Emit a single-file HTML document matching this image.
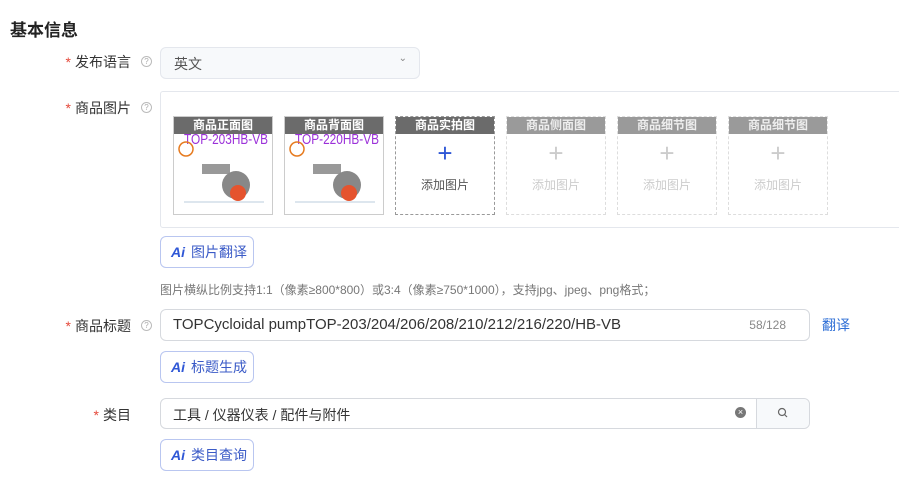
<!DOCTYPE html>
<html><head><meta charset="utf-8"><style>
*{box-sizing:border-box;margin:0;padding:0}
body{width:899px;height:485px;background:#fff;font-family:"Liberation Sans","Noto Sans CJK SC",sans-serif;color:#333;position:relative;overflow:hidden;font-size:14px}
.a{position:absolute}
.lbl{position:absolute;right:768px;font-size:14px;color:#333;white-space:nowrap}
.lbl b{color:#e5483a;font-weight:normal;margin-right:4px}
.q{position:absolute;width:11px;height:11px;border:1px solid #bbb;border-radius:50%;font-size:8px;color:#aaa;text-align:center;line-height:9px}
.ai{position:absolute;left:160px;width:94px;height:32px;border:1px solid #b9c6f0;border-radius:6px;color:#3b5bc7;font-size:14px;line-height:30px;padding-left:10px;white-space:nowrap}
.ai i{font-style:italic;font-weight:bold;margin-right:6px;color:#2f57d6}
.th{position:absolute;top:116px;width:100px;height:99px;border:1px solid #ccc;background:#fff;overflow:hidden}
.th .h{height:17px;background:#6b6b6b;color:#fff;font-size:12px;text-align:center;line-height:17px;font-weight:bold;position:relative;z-index:1}
.add{border:1px dashed #999}
.add.dim{border-color:#ddd}
.add.dim .h{background:#9a9a9a;color:#eee}
.add .p{text-align:center;font-size:26px;color:#2f57d6;line-height:26px;margin-top:6px}
.add .t{text-align:center;font-size:12px;color:#555;margin-top:10px}
.add.dim .p{color:#ccc}.add.dim .t{color:#ccc}
.th svg{position:absolute;left:0;top:0}
</style></head><body>
<div class="a" style="left:10px;top:16px;font-size:17px;font-weight:bold;color:#222">基本信息</div>

<div class="lbl" style="top:52px"><b>*</b>发布语言</div>
<div class="q" style="left:141px;top:56px">?</div>
<div class="a" style="left:160px;top:47px;width:260px;height:32px;border:1px solid #e4e7ed;border-radius:6px;background:#f7f9fb;padding:6px 13px;color:#555">英文<span style="position:absolute;right:12px;top:5px;font-size:10px;color:#888">&#8964;</span></div>

<div class="lbl" style="top:98px"><b>*</b>商品图片</div>
<div class="q" style="left:141px;top:102px">?</div>
<div class="a" style="left:160px;top:91px;width:745px;height:137px;border:1px solid #e4e7ed;border-radius:3px"></div>

<div class="th" style="left:173px"><div class="h">商品正面图</div>
<svg width="98" height="97"><text x="10" y="27" font-size="15" fill="#9b30d9" font-family="Liberation Sans" textLength="84" lengthAdjust="spacingAndGlyphs">TOP-203HB-VB</text><circle cx="12" cy="32" r="7" fill="none" stroke="#e67a1e" stroke-width="1.5"/><line x1="10" y1="85" x2="90" y2="85" stroke="#bcd" /><rect x="28" y="47" width="28" height="10" fill="#999"/><circle cx="62" cy="68" r="14" fill="#888"/><circle cx="64" cy="76" r="8" fill="#e5532e"/></svg></div>
<div class="th" style="left:284px"><div class="h">商品背面图</div>
<svg width="98" height="97"><text x="10" y="27" font-size="15" fill="#9b30d9" font-family="Liberation Sans" textLength="84" lengthAdjust="spacingAndGlyphs">TOP-220HB-VB</text><circle cx="12" cy="32" r="7" fill="none" stroke="#e67a1e" stroke-width="1.5"/><line x1="10" y1="85" x2="90" y2="85" stroke="#bcd" /><rect x="28" y="47" width="28" height="10" fill="#999"/><circle cx="62" cy="68" r="14" fill="#888"/><circle cx="64" cy="76" r="8" fill="#e5532e"/></svg></div>
<div class="th add" style="left:395px"><div class="h">商品实拍图</div><div class="p">+</div><div class="t">添加图片</div></div>
<div class="th add dim" style="left:506px"><div class="h">商品侧面图</div><div class="p">+</div><div class="t">添加图片</div></div>
<div class="th add dim" style="left:617px"><div class="h">商品细节图</div><div class="p">+</div><div class="t">添加图片</div></div>
<div class="th add dim" style="left:728px"><div class="h">商品细节图</div><div class="p">+</div><div class="t">添加图片</div></div>

<div class="ai" style="top:236px"><i>Ai</i>图片翻译</div>
<div class="a" style="left:160px;top:281px;font-size:12px;color:#777;white-space:nowrap">图片横纵比例支持1:1（像素≥800*800）或3:4（像素≥750*1000），支持jpg、jpeg、png格式；</div>

<div class="lbl" style="top:316px"><b>*</b>商品标题</div>
<div class="q" style="left:141px;top:320px">?</div>
<div class="a" style="left:160px;top:309px;width:650px;height:32px;border:1px solid #d6d9de;border-radius:6px;padding:6px 12px;color:#333;font-size:15px;white-space:nowrap">TOPCycloidal pumpTOP-203/204/206/208/210/212/216/220/HB-VB<span style="position:absolute;right:23px;top:8px;font-size:12px;color:#888">58/128</span></div>
<div class="a" style="left:822px;top:315px;color:#2f6fd6;font-size:14px">翻译</div>
<div class="ai" style="top:351px"><i>Ai</i>标题生成</div>

<div class="lbl" style="top:405px"><b>*</b>类目</div>
<div class="a" style="left:160px;top:398px;width:650px;height:31px;border:1px solid #d6d9de;border-radius:6px;padding:6px 12px;color:#333;font-size:14px">工具 / 仪器仪表 / 配件与附件
<span style="position:absolute;right:63px;top:8px;width:11px;height:11px;border-radius:50%;background:#777;color:#fff;font-size:9px;line-height:11px;text-align:center">×</span>
<span style="position:absolute;right:0;top:0;width:53px;height:29px;border-left:1px solid #d6d9de;background:#f7f9fb;border-radius:0 6px 6px 0"><svg width="53" height="29"><circle cx="25" cy="13" r="3.5" fill="none" stroke="#666" stroke-width="1.2"/><line x1="27.5" y1="15.5" x2="30" y2="18" stroke="#666" stroke-width="1.2"/></svg></span></div>
<div class="ai" style="top:439px"><i>Ai</i>类目查询</div>
</body></html>
